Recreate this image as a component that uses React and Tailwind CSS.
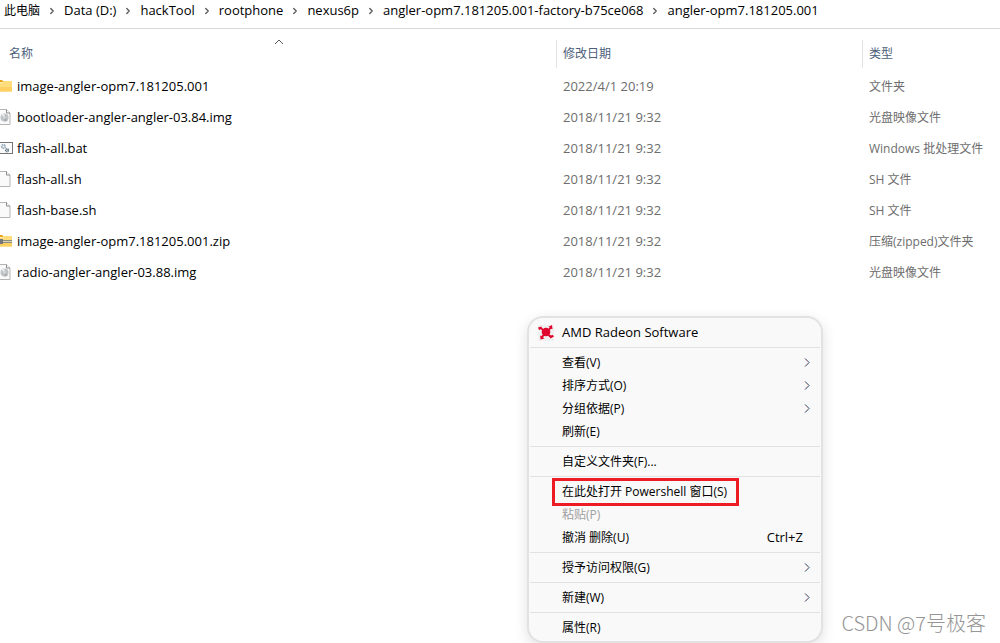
import { ChevronRight } from "lucide-react";

const crumbs = [
  "此电脑",
  "Data (D:)",
  "hackTool",
  "rootphone",
  "nexus6p",
  "angler-opm7.181205.001-factory-b75ce068",
  "angler-opm7.181205.001",
];

const files = [
  { name: "image-angler-opm7.181205.001", date: "2022/4/1 20:19", type: "文件夹", icon: "folder" },
  { name: "bootloader-angler-angler-03.84.img", date: "2018/11/21 9:32", type: "光盘映像文件", icon: "disc" },
  { name: "flash-all.bat", date: "2018/11/21 9:32", type: "Windows 批处理文件", icon: "bat" },
  { name: "flash-all.sh", date: "2018/11/21 9:32", type: "SH 文件", icon: "page" },
  { name: "flash-base.sh", date: "2018/11/21 9:32", type: "SH 文件", icon: "page" },
  { name: "image-angler-opm7.181205.001.zip", date: "2018/11/21 9:32", type: "压缩(zipped)文件夹", icon: "zip" },
  { name: "radio-angler-angler-03.88.img", date: "2018/11/21 9:32", type: "光盘映像文件", icon: "disc" },
];

// Each inner array is one group, groups are split by a line
const menu = [
  [{ label: "AMD Radeon Software", amd: true }],
  [
    { label: "查看(V)", sub: true },
    { label: "排序方式(O)", sub: true },
    { label: "分组依据(P)", sub: true },
    { label: "刷新(E)" },
  ],
  [{ label: "自定义文件夹(F)..." }],
  [
    { label: "在此处打开 Powershell 窗口(S)", marked: true },
    { label: "粘贴(P)", disabled: true },
    { label: "撤消 删除(U)", keys: "Ctrl+Z" },
  ],
  [{ label: "授予访问权限(G)", sub: true }],
  [{ label: "新建(W)", sub: true }],
  [{ label: "属性(R)" }],
];

// The name column is scrolled a little, so the left part of every icon is cut
function FileIcon({ type }) {
  return (
    <svg viewBox="3 0 13 16" className="w-[13px] h-4 shrink-0" aria-hidden="true">
      {(type === "folder" || type === "zip") && (
        <>
          <path d="M0 2h5l2 2h-7z" fill="#e8a317" />
          <path d="M0 4.5h5.5l1.5-1.5h7q1 0 1 1v9q0 .5-1 .5H0z" fill="#ffdd7d" />
          <path d="M0 9h15v4q0 .5-1 .5H0z" fill="#fed062" />
        </>
      )}
      {type === "zip" && (
        <>
          <path d="M0 7h15v3H0z" fill="#8c8c7c" />
          <path d="M0 8h15v1H0z" fill="#d9d4b8" />
          <path d="M3 6h3v5H3z" fill="#777" />
        </>
      )}
      {(type === "page" || type === "disc") && (
        <>
          <path d="M1 .5h8.500l3.500 3.500v11.500H1z" fill="#fafafa" stroke="#b5b5b5" />
          <path d="M9.500 .5v3.500h3.500" fill="#fff" stroke="#8a8a8a" />
        </>
      )}
      {type === "disc" && (
        <>
          <circle cx="7.500" cy="8.500" r="4" fill="#bfc3c6" />
          <path d="M7.500 8.500l-3-2.600a4 4 0 0 1 3-1.400z" fill="#e9ebec" />
          <path d="M7.500 8.500l3.200 2.400a4 4 0 0 1-3.200 1.600z" fill="#a9aeb2" />
          <circle cx="7.500" cy="8.500" r="1.200" fill="#d4d7d9" />
        </>
      )}
      {type === "bat" && (
        <>
          <rect x=".5" y="2.500" width="15" height="11" fill="#fbfbfb" stroke="#757575" />
          <circle cx="6.500" cy="6.500" r="1.700" fill="none" stroke="#9fb0bd" strokeWidth="2" strokeDasharray="1.400 .5" />
          <circle cx="10" cy="10.300" r="1.300" fill="none" stroke="#5f7482" strokeWidth="1.600" strokeDasharray="1.100 .4" />
        </>
      )}
    </svg>
  );
}

function AmdIcon() {
  return (
    <svg viewBox="0 0 16 16" className="w-4 h-4" aria-hidden="true">
      <path d="M0 0h16v16H0z" fill="#f0f0f0" />
      <g fill="#e0052d">
        <circle cx="8" cy="7" r="4.300" />
        <path d="M0 2.500l3.500-1 .3 1.300 2 1.700-1.300 1.300-1.800-1.500-1.700.7zM10.500 1.800l3.500-1.800.5 4.200-1.300-.5-1.600 1.600-1.300-1.200 1.400-1.700zM2.500 14.500l-.3-4 1.300.6 1.600-1.900 1.500 1.300-1.600 1.800 1.500 1.200zM16 11.500l-3.500 2-.7-1.300-2-1.500 1.300-1.400 2 1.300 1.400-.8z" />
      </g>
    </svg>
  );
}

function SubArrow() {
  return (
    <svg viewBox="0 0 7 10" className="ml-auto w-[7px] h-[10px] shrink-0" fill="none" aria-hidden="true">
      <path d="M1.500 .5l4 4-4 4" stroke="#58b4e0" />
      <path d="M.8 .5l4 4-4 4" stroke="#a04a40" strokeWidth=".8" />
    </svg>
  );
}

function MenuItem({ item }) {
  return (
    <button
      type="button"
      role="menuitem"
      disabled={item.disabled}
      className="flex items-center w-full h-[23px] pr-[9px] text-left text-black disabled:text-[#a0a0a0]"
    >
      <span className="w-8 pl-2 shrink-0">{item.amd && <AmdIcon />}</span>
      <span className={item.amd ? "text-[13px]" : "relative"}>
        {item.label}
        {item.marked && (
          <span className="absolute -left-[10px] -right-3 -inset-y-[6px] border-3 border-[#ed1c24]" />
        )}
      </span>
      {item.keys && <span className="ml-auto mr-2 text-[13px]">{item.keys}</span>}
      {item.sub && <SubArrow />}
    </button>
  );
}

export default function App() {
  return (
    <div className="relative min-h-screen overflow-hidden bg-white text-xs text-black font-['Open_Sans','Noto_Sans_CJK_SC',sans-serif]">
      <nav className="flex items-center h-[29px] pb-[6px] pl-1 border-b border-[#d9d9d9] whitespace-nowrap">
        {crumbs.map((crumb, i) => (
          <div key={crumb} className="flex items-center">
            {i > 0 && <ChevronRight className="w-2.5 h-2.5 mx-[7px] text-[#555]" strokeWidth={3} />}
            <a href="#" className={i === 0 ? "text-xs" : "text-[13px]"}>{crumb}</a>
          </div>
        ))}
      </nav>

      <table className="w-full table-fixed text-left whitespace-nowrap">
        <thead>
          <tr className="h-[42px] text-[#4c607a]">
            <th className="relative w-[556px] pl-[9px] pt-2 font-normal">
              名称
              <svg viewBox="0 0 10 6" className="absolute left-[274px] top-[10px] w-[10px] h-[6px]" fill="none" aria-hidden="true">
                <path d="M1 5l4-4 4 4" stroke="#5a5a5a" />
              </svg>
            </th>
            <th className="w-[306px] pt-2 font-normal">
              <div className="flex items-center h-7 pl-[6px] border-l border-[#e2e2e2]">修改日期</div>
            </th>
            <th className="pt-2 font-normal">
              <div className="flex items-center h-7 pl-[6px] border-l border-[#e2e2e2]">类型</div>
            </th>
          </tr>
        </thead>
        <tbody>
          {files.map((file) => (
            <tr key={file.name} className="h-[31px] text-[#6d6d6d]">
              <td>
                <div className="flex items-center gap-1 text-[13px] text-black">
                  <FileIcon type={file.icon} />
                  {file.name}
                </div>
              </td>
              <td className="pl-[7px] text-[13px]">{file.date}</td>
              <td className="pl-[7px]">{file.type}</td>
            </tr>
          ))}
        </tbody>
      </table>

      <div
        role="menu"
        className="absolute left-[527px] top-[316px] w-[296px] px-px rounded-2xl border-2 border-[#e2e2e2] bg-[#f9f9f9] shadow-[0_4px_14px_rgba(0,0,0,0.12)] divide-y divide-[#e2e2e2]"
      >
        {menu.map((group) => (
          <div key={group[0].label} className="py-[3px] last:pb-0.5">
            {group.map((item) => (
              <MenuItem key={item.label} item={item} />
            ))}
          </div>
        ))}
      </div>

      <div className="absolute right-[14px] bottom-[6px] text-xl leading-7 text-[#959595] font-['Noto_Sans_CJK_SC',sans-serif] font-light">
        CSDN @7号极客
      </div>
    </div>
  );
}
